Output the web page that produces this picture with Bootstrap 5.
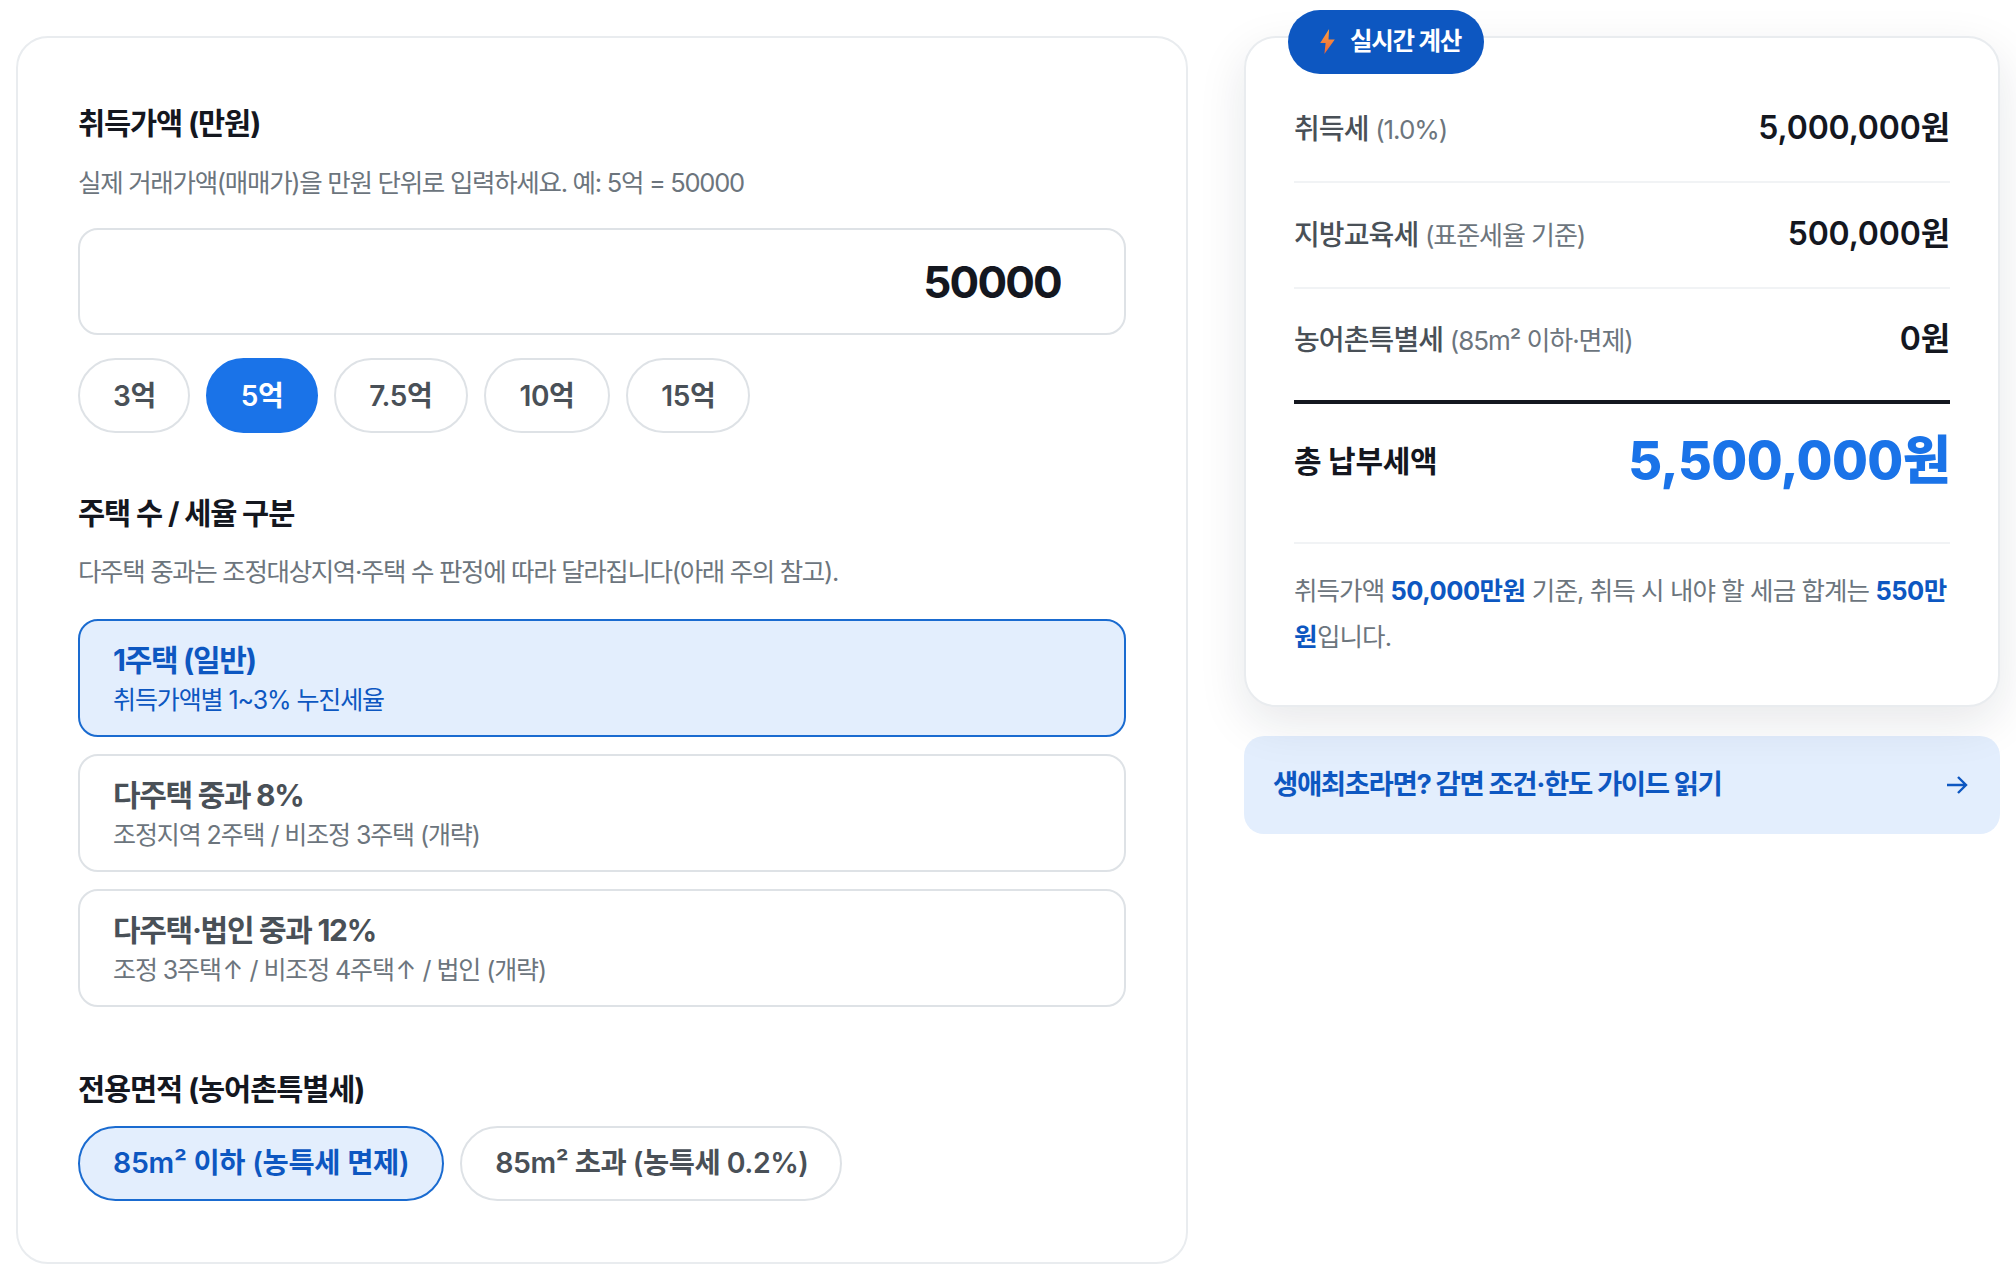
<!DOCTYPE html>
<html lang="ko">
<head>
<meta charset="utf-8">
<title>취득세 계산기</title>
<link href="https://cdn.jsdelivr.net/npm/bootstrap@5.3.0/dist/css/bootstrap.min.css" rel="stylesheet">
<style>
body{font-family:Inter,"Noto Sans CJK KR",sans-serif;background:#fff;color:#14171f;margin:0}
.page-wrap{display:grid;grid-template-columns:1172px 756px;column-gap:56px;padding:36px 16px 16px;align-items:start}
.form-panel{border:2px solid #e9ecef;border-radius:32px;padding:65px 60px 0;height:1228px}
.sec-title{font-size:29.5px;font-weight:700;line-height:40px;margin:0;letter-spacing:-1.1px}
.sec-help{font-size:25.5px;line-height:36px;color:#6c757d;margin:22px 0 0;letter-spacing:-1.3px}
.title-two + .sec-help{margin-top:21px;letter-spacing:-1.35px}
.amount-box{height:107px;border:2px solid #dee2e6;border-radius:20px;font-size:44px;font-weight:700;text-align:right;padding:0 63px 0 62px;margin-top:27px;color:#14171f;box-shadow:none;letter-spacing:-1.8px}
.chip-row{margin-top:23px}
.chip{height:75px;border:2px solid #dee2e6;border-radius:38px;background:#fff;color:#495057;font-size:28px;font-weight:600;padding:0 33px;display:flex;align-items:center;letter-spacing:-.4px}
.chip-less{padding-right:32px}
.chip-more{padding-right:34px}
.chip-wide{font-size:28.5px;letter-spacing:-.3px}
.chip-tail{padding-right:32px;letter-spacing:-.5px}
.chip.on-solid{background:#1a73e8;border-color:#1a73e8;color:#fff}
.chip.on-soft{background:#e3eefd;border-color:#1a6bd0;color:#0d57c1}
.title-two{margin-top:60px}
.title-three{margin-top:62px}
.opt-list{margin-top:29px;gap:17px}
.opt{height:118px;border:2px solid #dee2e6;border-radius:20px;padding:3px 33px 0;display:flex;flex-direction:column;justify-content:center;color:#495057}
.opt-name{font-size:30px;font-weight:700;line-height:40px;letter-spacing:-1.3px}
.opt-desc{font-size:25px;line-height:38px;color:#6c757d;letter-spacing:-1.1px;margin-top:1px}
.up-mark{margin:0 1.5px}
.opt.sel{background:#e3eefd;border-color:#1a6bd0;color:#0d57c1}
.opt.sel .opt-desc{color:#0d57c1}
.area-row{margin-top:17px}
.result-col{position:relative}
.result-panel{position:relative;z-index:1;background:#fff;border:2px solid #e9ecef;border-radius:32px;padding:39px 48px 0;height:671px;box-shadow:0 16px 48px rgba(20,30,50,.1)}
.live-tag{position:absolute;z-index:2;left:44px;top:-26px;width:196px;height:64px;background:#0d57c1;color:#fff;border-radius:32px;font-size:24.5px;font-weight:700;display:flex;align-items:center;gap:15px;padding:0 0 1px 32px;letter-spacing:-1.25px}
.calc-row{height:106px;border-bottom:2px solid #f1f3f5;display:flex;justify-content:space-between;align-items:center;padding-bottom:2px}
.calc-row.last{border-bottom:0;height:111px;padding-bottom:11px}
.calc-label{font-size:28px;font-weight:500;color:#495057;letter-spacing:-.9px;padding-top:1px}
.calc-label small{font-size:26px;font-weight:400;color:#6c757d;letter-spacing:-1.05px}
.calc-val{font-size:32px;font-weight:600;color:#14171f;letter-spacing:-.15px}
.total-row{border-top:4px solid #14171f;height:144px;display:flex;justify-content:space-between;align-items:center;padding-bottom:24px;border-bottom:2px solid #f1f3f5}
.total-label{font-size:30px;font-weight:700;letter-spacing:-.3px}
.total-val{font-size:52px;font-weight:800;color:#1a73e8;letter-spacing:-.6px}
.note{font-size:25.5px;line-height:46px;color:#6c757d;margin:24px 0 0;letter-spacing:-.9px}
.note strong{color:#0d57c1;font-weight:700;letter-spacing:-.5px}
.guide-link{margin-top:29px;height:98px;background:#e3eefd;border-radius:20px;padding:0 32px 0 29px;display:flex;justify-content:space-between;align-items:center;color:#0d57c1;font-size:27.5px;font-weight:700;text-decoration:none;letter-spacing:-1.4px}
</style>
</head>
<body>
<div class="page-wrap">
  <div class="form-panel">
    <p class="sec-title">취득가액 (만원)</p>
    <p class="sec-help">실제 거래가액(매매가)을 만원 단위로 입력하세요. 예: 5억 = 50000</p>
    <input class="form-control amount-box" type="text" value="50000" aria-label="취득가액">
    <div class="d-flex gap-3 chip-row">
      <button class="chip chip-less" type="button">3억</button>
      <button class="chip on-solid" type="button">5억</button>
      <button class="chip chip-more" type="button">7.5억</button>
      <button class="chip chip-more" type="button">10억</button>
      <button class="chip" type="button">15억</button>
    </div>
    <p class="sec-title title-two">주택 수 / 세율 구분</p>
    <p class="sec-help">다주택 중과는 조정대상지역·주택 수 판정에 따라 달라집니다(아래 주의 참고).</p>
    <div class="d-flex flex-column opt-list">
      <div class="opt sel"><div class="opt-name">1주택 (일반)</div><div class="opt-desc">취득가액별 1~3% 누진세율</div></div>
      <div class="opt"><div class="opt-name">다주택 중과 8%</div><div class="opt-desc">조정지역 2주택 / 비조정 3주택 (개략)</div></div>
      <div class="opt"><div class="opt-name">다주택·법인 중과 12%</div><div class="opt-desc">조정 3주택<span class="up-mark">↑</span> / 비조정 4주택<span class="up-mark">↑</span> / 법인 (개략)</div></div>
    </div>
    <p class="sec-title title-three">전용면적 (농어촌특별세)</p>
    <div class="d-flex gap-3 area-row">
      <button class="chip chip-wide on-soft" type="button">85m² 이하 (농특세 면제)</button>
      <button class="chip chip-wide chip-tail" type="button">85m² 초과 (농특세 0.2%)</button>
    </div>
  </div>
  <div class="result-col">
    <div class="live-tag"><svg width="15" height="25" viewBox="0 0 14 24" aria-hidden="true"><defs><linearGradient id="bolt" x1="0" y1="0" x2="0" y2="1"><stop offset="0" stop-color="#ffa03c"/><stop offset="1" stop-color="#e8643c"/></linearGradient></defs><path d="M8.5 0 0 13.5h5.2L4 24l10-14H8z" fill="url(#bolt)"/></svg><span>실시간 계산</span></div>
    <div class="result-panel">
      <div class="calc-row"><span class="calc-label">취득세 <small>(1.0%)</small></span><span class="calc-val">5,000,000원</span></div>
      <div class="calc-row"><span class="calc-label">지방교육세 <small>(표준세율 기준)</small></span><span class="calc-val">500,000원</span></div>
      <div class="calc-row last"><span class="calc-label">농어촌특별세 <small>(85m² 이하·면제)</small></span><span class="calc-val">0원</span></div>
      <div class="total-row"><span class="total-label">총 납부세액</span><span class="total-val">5,500,000원</span></div>
      <p class="note">취득가액 <strong>50,000만원</strong> 기준, 취득 시 내야 할 세금 합계는 <strong>550만원</strong>입니다.</p>
    </div>
    <a class="guide-link" href="#"><span>생애최초라면? 감면 조건·한도 가이드 읽기</span><svg width="22" height="20" viewBox="0 0 22 20" fill="none" stroke="#0d57c1" stroke-width="2.4" aria-hidden="true"><path d="M1 10h19M12 2l8 8-8 8"/></svg></a>
  </div>
</div>
<script src="https://cdn.jsdelivr.net/npm/bootstrap@5.3.0/dist/js/bootstrap.bundle.min.js"></script>
</body>
</html>
